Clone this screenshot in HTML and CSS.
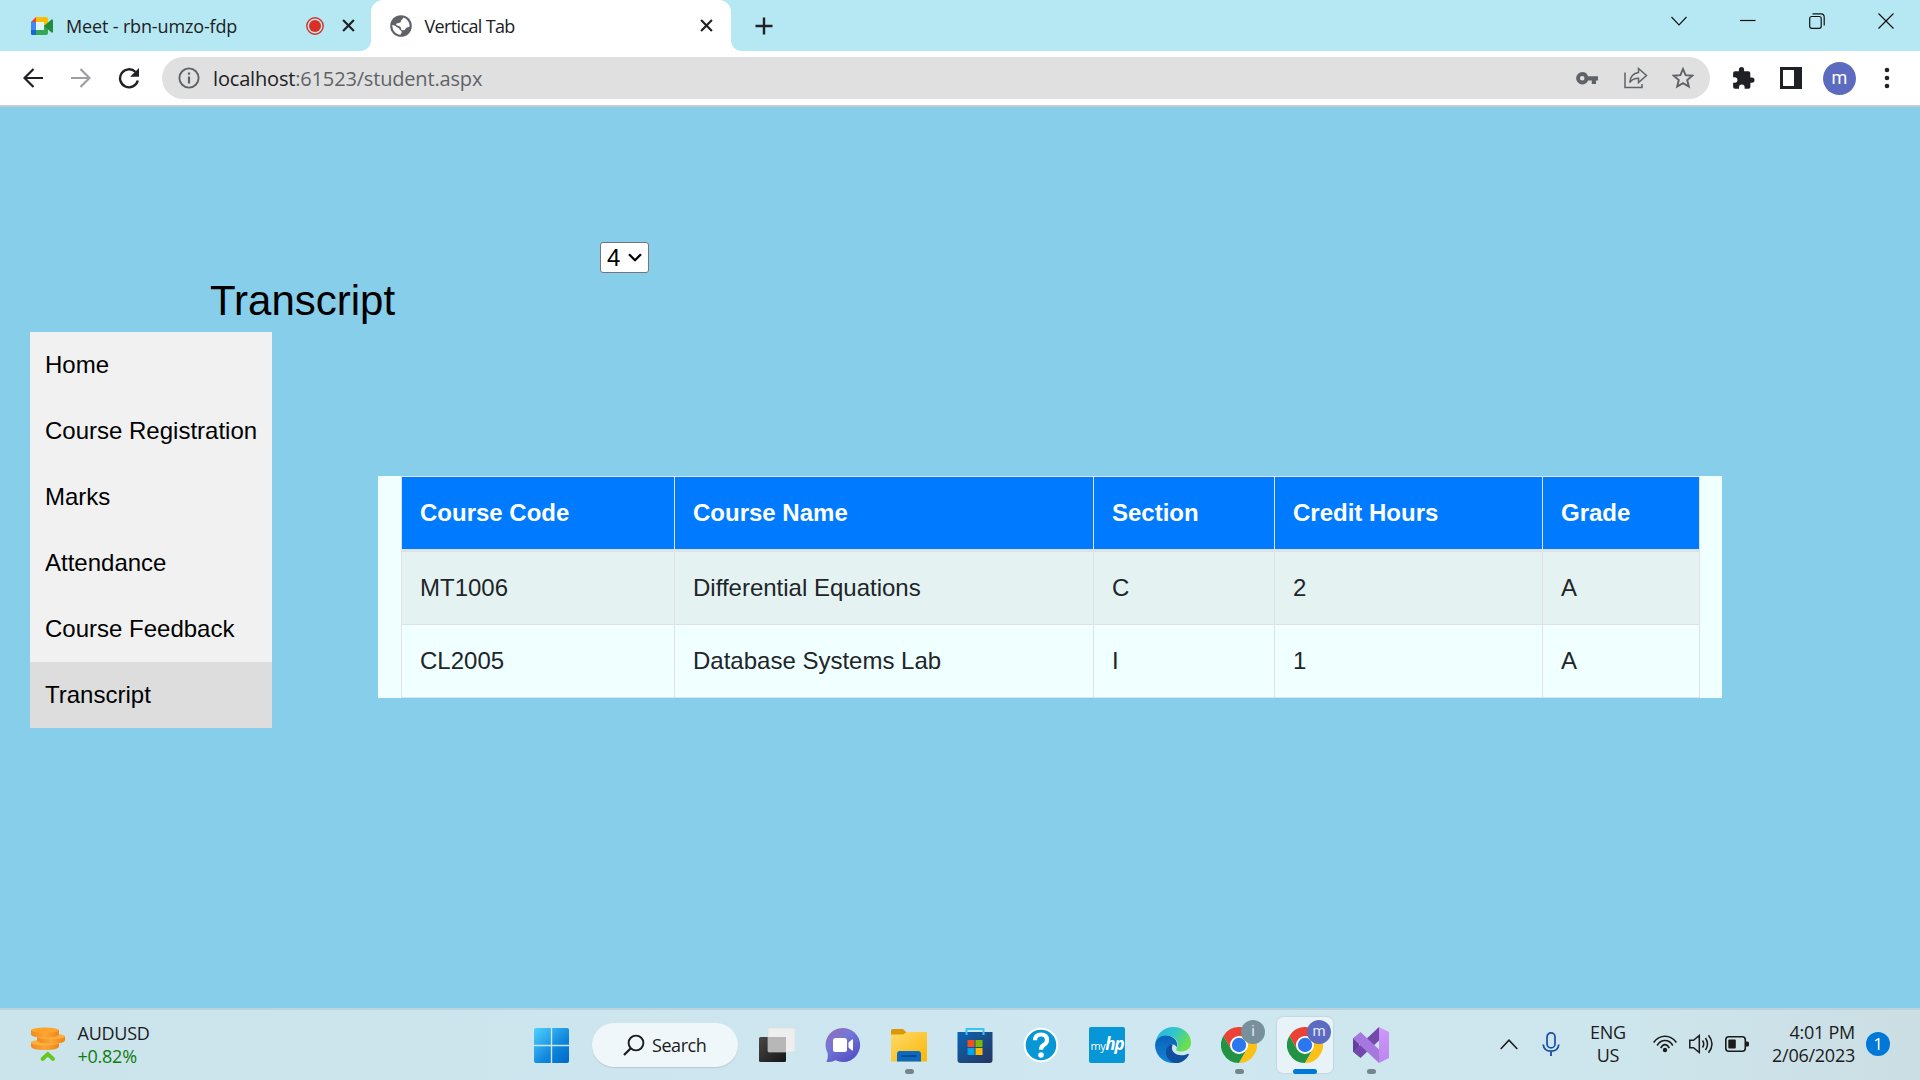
FILE: index.html
```html
<!DOCTYPE html>
<html lang="en">
<head>
<meta charset="utf-8">
<title>Vertical Tab</title>
<link rel="stylesheet" href="styles.css">
</head>
<body>
<svg width="0" height="0" class="defs">
  <defs>
    <linearGradient id="win" x1="0" y1="0" x2="1" y2="1"><stop offset="0" stop-color="#4fd3ff"/><stop offset=".6" stop-color="#0f86dc"/><stop offset="1" stop-color="#0068c6"/></linearGradient>
    <linearGradient id="dark" x1="0" y1="0" x2="1" y2="1"><stop offset="0" stop-color="#484848"/><stop offset="1" stop-color="#151515"/></linearGradient>
    <linearGradient id="chat" x1="0" y1="0" x2=".7" y2="1"><stop offset="0" stop-color="#9b6bb0"/><stop offset=".45" stop-color="#7377d8"/><stop offset="1" stop-color="#5350c4"/></linearGradient>
    <linearGradient id="folder" x1="0" y1="0" x2="1" y2="1"><stop offset="0" stop-color="#ffdb6b"/><stop offset="1" stop-color="#fbb506"/></linearGradient>
    <linearGradient id="store" x1="0" y1="0" x2="1" y2="1"><stop offset="0" stop-color="#0966b5"/><stop offset="1" stop-color="#27345c"/></linearGradient>
    <linearGradient id="edgeTop" x1="0" y1="0" x2="1" y2=".5"><stop offset="0" stop-color="#2bb0e6"/><stop offset=".5" stop-color="#2fc6cf"/><stop offset="1" stop-color="#6be04a"/></linearGradient>
    <linearGradient id="edgeSide" x1="0" y1="0" x2="0" y2="1"><stop offset="0" stop-color="#0c62b6"/><stop offset="1" stop-color="#1184d9"/></linearGradient>
    <linearGradient id="vs" x1="0" y1="0" x2="0" y2="1"><stop offset="0" stop-color="#cf97fb"/><stop offset="1" stop-color="#bb86ee"/></linearGradient>
    <linearGradient id="coin" x1="0" y1="0" x2="1" y2="0"><stop offset="0" stop-color="#f08a18"/><stop offset=".5" stop-color="#fba53a"/><stop offset="1" stop-color="#ef8512"/></linearGradient>
    <symbol id="x" viewBox="0 0 12 12"><path d="M1 1l10 10M11 1L1 11" stroke="#202124" stroke-width="2" fill="none"/></symbol>
    <symbol id="chrome" viewBox="0 0 36 36">
      <path d="M18 9L2.400 9A18 18 0 0 1 33.600 9z" fill="#ea4335"/>
      <path d="M2.400 9L10.200 22.500L12 12L18 9z" fill="#ea4335"/>
      <path d="M2.400 9L10.200 22.500L18 27L25.800 22.500L18 36A18 18 0 0 1 2.400 9z" fill="#229342"/>
      <path d="M25.800 22.500L18 36A18 18 0 0 0 33.600 9H18z" fill="#fbc116"/>
      <circle cx="18" cy="18" r="9" fill="#fff"/><circle cx="18" cy="18" r="7.200" fill="#2b78ee"/>
    </symbol>
  </defs>
</svg>

<header class="tabstrip">
  <div class="tab tab-meet">
    <svg class="meet" width="22" height="18" viewBox="0 0 22 18"><path d="M5 0L0 5h5z" fill="#ea4335"/><path d="M0 5h5v8H0z" fill="#4285f4"/><path d="M0 13h5v5H1.500A1.500 1.500 0 0 1 0 16.500z" fill="#1967d2"/><path d="M5 0h10a2 2 0 0 1 2 2v5l-4 3V5H5z" fill="#fbbc04"/><path d="M5 13h8V8l4 2v6a2 2 0 0 1-2 2H5z" fill="#34a853"/><path d="M5 5h8v8H5z" fill="#dff4f7"/><path d="M13 9l7.500-6.500Q22 2 22 3.500v11Q22 16 20.500 15.500z" fill="#1e8e3e"/></svg>
    <span class="tab-title meet-title">Meet - rbn-umzo-fdp</span>
    <svg class="rec" width="18" height="18" viewBox="0 0 18 18"><circle cx="9" cy="9" r="8.200" fill="none" stroke="#d93025" stroke-width="1.400"/><circle cx="9" cy="9" r="6" fill="#d93025"/></svg>
    <svg width="13" height="13"><use href="#x"/></svg>
  </div>
  <div class="tab tab-active">
    <svg class="globe" width="22" height="22" viewBox="0 0 22 22"><circle cx="11" cy="11" r="10.800" fill="#5f6368"/><path d="M13 2.600a8.700 8.700 0 0 1 6.700 8.400c-1 1.800-2.500.8-3.700 2.200-1 1.300-1.500 2.300-3.500 2.100-2-.3-1-3-2.500-3.800S6 11 6.200 9.300c.2-1.500 2-.8 3.600-1.500s.6-1.600 1.600-2.500S13 4 13 2.600z" fill="#fff"/><path d="M2.300 10c2.500 0 3.200 1.200 4.200 2s2.500.7 3 2.200 2 1 2.200 2.600-.9 1.500-1.200 2.900C5.500 19.500 2.300 15.500 2.300 10z" fill="#fff"/></svg>
    <span class="tab-title vt-title">Vertical Tab</span>
    <svg class="close2" width="13" height="13"><use href="#x"/></svg>
  </div>
  <svg class="plus" width="18" height="18" viewBox="0 0 18 18"><path d="M9 .5v17M.5 9h17" stroke="#202124" stroke-width="2.400"/></svg>
  <div class="winbtns">
    <svg width="16" height="16" viewBox="0 0 16 16"><path d="M.5 4L8 12l7.500-8" fill="none" stroke="#111" stroke-width="1.100"/></svg>
    <svg width="16" height="16" viewBox="0 0 16 16"><path d="M0 7.500h15.500" stroke="#111" stroke-width="1.200"/></svg>
    <svg width="16" height="16" viewBox="0 0 16 16"><rect x=".7" y="3.500" width="11.500" height="11.800" rx="2" fill="none" stroke="#111" stroke-width="1.200"/><path d="M3.500.8h8.500q3.200 0 3.200 3.200v8.500" fill="none" stroke="#111" stroke-width="1.200"/></svg>
    <svg width="16" height="16" viewBox="0 0 16 16"><path d="M.5.500l15 15M15.500.500l-15 15" stroke="#111" stroke-width="1.200"/></svg>
  </div>
</header>

<div class="toolbar">
  <div class="navbtns">
    <svg width="20" height="20" viewBox="0 0 20 20"><path d="M20 10H2M10.500 1L1.500 10l9 9" fill="none" stroke="#202124" stroke-width="2.200"/></svg>
    <svg width="20" height="20" viewBox="0 0 20 20"><path d="M0 10h18M9.500 1l9 9-9 9" fill="none" stroke="#9e9fa2" stroke-width="2.200"/></svg>
    <svg width="22" height="22" viewBox="0 0 22 22"><path d="M17.500 5A9 9 0 1 0 19.800 13.500" fill="none" stroke="#202124" stroke-width="2.400"/><path d="M21 1v8.800h-8.800z" fill="#202124"/></svg>
  </div>
  <div class="omnibox">
    <svg width="22" height="22" viewBox="0 0 22 22"><circle cx="11" cy="11" r="9.600" fill="none" stroke="#5f6368" stroke-width="1.900"/><path d="M11 9.500v7M11 5.500v2.200" stroke="#5f6368" stroke-width="2.200"/></svg>
    <span class="url"><b>localhost</b>:61523/student.aspx</span>
    <svg class="key" width="22" height="13" viewBox="0 0 22 13"><path fill-rule="evenodd" d="M6.200 0a6.200 6.200 0 0 1 5.900 4.300H22v4.200h-2V12h-4.200V8.500h-3.700A6.200 6.200 0 1 1 6.200 0zm0 4a2.300 2.300 0 1 0 0 4.600 2.300 2.300 0 0 0 0-4.600z" fill="#5f6368"/></svg>
    <svg class="share" width="24" height="22" viewBox="0 0 24 22"><path d="M1 5.500V20.500H18V17" fill="none" stroke="#5f6368" stroke-width="1.500"/><path d="M14.500 1.500l8 7-8 7v-4.200c-4 0-6.800 1.200-8.800 4.200.6-5.500 3.500-9.300 8.800-10z" fill="none" stroke="#5f6368" stroke-width="1.500"/></svg>
    <svg class="star" width="22" height="22" viewBox="0 0 22 22"><path d="M11 2l2.600 6.200 6.700.5-5.100 4.400 1.600 6.500L11 16.100l-5.800 3.500 1.600-6.500-5.100-4.400 6.700-.5z" fill="none" stroke="#5f6368" stroke-width="1.900"/></svg>
  </div>
  <svg class="puzzle" width="22" height="22" viewBox="0 0 22 22"><path d="M18.800 10.500h-1.500V6.300a2 2 0 0 0-2-2h-4.200V2.700a2.600 2.600 0 0 0-5.200 0v1.600H2a2 2 0 0 0-1.900 2v3.900h1.500a2.800 2.800 0 0 1 0 5.600H.1v4a2 2 0 0 0 1.900 2h4v-1.500a2.800 2.800 0 0 1 5.600 0v1.500h3.900a2 2 0 0 0 1.900-2v-4.100h1.500a2.600 2.600 0 0 0 0-5.200z" fill="#202124"/></svg>
  <svg class="panel" width="22" height="22" viewBox="0 0 22 22"><path fill-rule="evenodd" d="M0 0h22v22H0zM3 3v16h11V3z" fill="#202124"/></svg>
  <span class="avatar">m</span>
  <svg width="6" height="22" viewBox="0 0 6 22"><g fill="#202124"><circle cx="3" cy="3" r="2.300"/><circle cx="3" cy="11" r="2.300"/><circle cx="3" cy="19" r="2.300"/></g></svg>
</div>

<main class="page">
  <div class="semester">4<svg width="14" height="9" viewBox="0 0 14 9"><path d="M1 1.200l6 6 6-6" fill="none" stroke="#000" stroke-width="2.200"/></svg></div>
  <h1>Transcript</h1>
  <div class="content">
    <nav>
      <a>Home</a><a>Course Registration</a><a>Marks</a><a>Attendance</a><a>Course Feedback</a><a class="current">Transcript</a>
    </nav>
    <section class="panel-table">
      <div class="grid">
        <div class="row head"><span>Course Code</span><span>Course Name</span><span>Section</span><span>Credit Hours</span><span>Grade</span></div>
        <div class="row odd"><span>MT1006</span><span>Differential Equations</span><span>C</span><span>2</span><span>A</span></div>
        <div class="row"><span>CL2005</span><span>Database Systems Lab</span><span>I</span><span>1</span><span>A</span></div>
      </div>
    </section>
  </div>
</main>

<footer class="taskbar">
  <div class="widget">
    <svg width="34" height="36" viewBox="0 0 34 36"><path d="M0 19v-4q14-4 28 0v4q0 4-14 4T0 19z" fill="url(#coin)"/><ellipse cx="14" cy="15.500" rx="14" ry="3" fill="#fcb040"/><path d="M6 13V9q14-4 28 0v4q0 3.500-14 3.500T6 13z" fill="url(#coin)"/><ellipse cx="20" cy="9.500" rx="14" ry="2.800" fill="#fcae3c"/><path d="M0 7V3q14-4 28 0v4q0 3.500-14 3.500T0 7z" fill="url(#coin)"/><ellipse cx="14" cy="3.200" rx="13.500" ry="2.800" fill="#ffa428"/><path d="M11.500 32l5.300-5 5.300 5" fill="none" stroke="#66c61c" stroke-width="3.800" stroke-linecap="round"/></svg>
    <div class="ticker"><span>AUDUSD</span><span class="up">+0.82%</span></div>
  </div>
  <svg class="start" width="35" height="35" viewBox="0 0 35 35"><path d="M2 0h14.800v16.800H0V2Q0 0 2 0zM18.200 0H33q2 0 2 2v14.800H18.200zM0 18.200h16.800V35H2q-2 0-2-2zM18.200 18.200H35V33q0 2-2 2H18.200z" fill="url(#win)"/></svg>
  <div class="search"><svg width="22" height="22" viewBox="0 0 22 22"><circle cx="13" cy="9" r="7.400" fill="none" stroke="#1b1b1b" stroke-width="1.900"/><path d="M7.800 14.200L1 21" stroke="#1b1b1b" stroke-width="2.200"/></svg><span>Search</span></div>
  <div class="apps">
    <div class="app"><svg width="36" height="36" viewBox="0 0 36 36"><rect x="0" y="10" width="27" height="25" rx="1.500" fill="url(#dark)"/><rect x="9" y="1" width="27" height="24" rx="1" fill="#eee" stroke="#dcdcdc" stroke-width=".6"/><path d="M9 10h18v15H9z" fill="#b7b7b7"/></svg></div>
    <div class="app"><svg width="36" height="36" viewBox="0 0 36 36"><path d="M18 1a17 17 0 1 1-7.500 32.200Q6 35.500 1.300 35 3.500 31.500 2.600 26A17 17 0 0 1 18 1z" fill="url(#chat)"/><rect x="8" y="11" width="14" height="14" rx="2.500" fill="#fff"/><path d="M23.500 15.500l3.500-3q1-.5 1 .6v9.800q0 1-1 .6l-3.500-3z" fill="#fff"/></svg></div>
    <div class="app"><svg width="36" height="36" viewBox="0 0 36 36"><path d="M0 3.500Q0 2 1.500 2H12l4 4v6H0z" fill="#dc9705"/><path d="M0 7.500h12l4-2.500h19q1 0 1 1v28.500H0z" fill="url(#folder)"/><path d="M6 34.500V27q0-3 3-3h18q3 0 3 3v7.500z" fill="#096abf"/><path d="M11 29h14" stroke="#053f84" stroke-width="1.600" stroke-linecap="round"/></svg><i></i></div>
    <div class="app"><svg width="36" height="36" viewBox="0 0 36 36"><path d="M.5 5H35.500v28q0 3-3 3h-29q-3 0-3-3z" fill="url(#store)"/><path d="M9.500 8V2h17v6" fill="none" stroke="#36c6f4" stroke-width="2"/><path d="M10.500 13h7v7h-7z" fill="#f25022"/><path d="M18.500 13h7v7h-7z" fill="#7fba00"/><path d="M10.500 21h7v7h-7z" fill="#00a4ef"/><path d="M18.500 21h7v7h-7z" fill="#ffb900"/></svg></div>
    <div class="app"><svg width="36" height="36" viewBox="0 0 36 36"><circle cx="18" cy="18" r="16.300" fill="#0797d6" stroke="#fff" stroke-width="2"/><path d="M12 13.200Q12 7.500 18 7.500T24 13q0 3-3 4.800-3 1.700-3 5" fill="none" stroke="#fff" stroke-width="4.200"/><circle cx="18" cy="28" r="2.800" fill="#fff"/></svg></div>
    <div class="app"><span class="hp">my<b>hp</b></span></div>
    <div class="app"><svg width="36" height="36" viewBox="0 0 36 36"><path d="M.3 16.500C1.500 7 8.500 0 18.200 0 29 0 36 7.500 36 15.500c0 5.500-4 9-9.500 9-4 0-6-1.300-5.200-2.500 3.200-4.500 1-12-8-13.200C7 8 2 12 .3 16.500z" fill="url(#edgeTop)"/><path d="M0 18C1 10.500 7.500 8 12.500 8.700c7 .7 11 6 9.300 11.600-1-2.200-3-3.300-5-2.800-3 .8-4 5-2 9.500 2 4.500 6 8 10 7.700A18 18 0 0 1 0 18z" fill="url(#edgeSide)"/><path d="M14 18.500c-6 5-3 15.500 6 17.400 6 .6 11-3 13.700-8 .5-1-.3-1.500-1.200-1-4 2-11 2-14.500-2.500-1.300-1.800-1.300-4-.3-6.800-1.400-.4-2.700 0-3.700.9z" fill="#104f9d"/></svg></div>
    <div class="app"><svg width="36" height="36"><use href="#chrome"/></svg><em class="badge gray">i</em><i></i></div>
    <div class="app active"><svg width="36" height="36"><use href="#chrome"/></svg><em class="badge">m</em><i></i></div>
    <div class="app"><svg width="36" height="36" viewBox="0 0 36 36"><path d="M0 11.500L6 7v22.500L0 24.500z" fill="#60409c"/><path d="M0 24.500L7.500 31 26 13.500V0z" fill="#7249aa"/><path d="M0 11.500L7.500 5 26 22.500V36z" fill="#a677de"/><path d="M26 0l10 5v26l-10 5z" fill="url(#vs)"/></svg><i></i></div>
  </div>
  <div class="tray">
    <svg class="up-arrow" width="18" height="11" viewBox="0 0 18 11"><path d="M.7 10L9 1.200 17.300 10" fill="none" stroke="#1b1b1b" stroke-width="1.500"/></svg>
    <svg class="mic" width="18" height="24" viewBox="0 0 18 24"><rect x="5" y=".9" width="8" height="15" rx="4" fill="none" stroke="#174ea6" stroke-width="1.700"/><path d="M1.200 12.500Q2 19.200 9 19.200t7.800-6.700M9 19v5" fill="none" stroke="#174ea6" stroke-width="1.800"/></svg>
    <div class="lang"><span>ENG</span><span>US</span></div>
    <svg class="wifi" width="24" height="18" viewBox="0 0 24 18"><g fill="none" stroke="#1b1b1b" stroke-width="1.600"><path d="M.6 7.500Q5 1.200 12 1.200t11.400 6.300M4.200 10.500Q7 5.500 12 5.500t7.800 5M7.700 13.200Q9.500 9.600 12 9.600t4.300 3.600"/></g><circle cx="12" cy="15" r="2.200" fill="#1b1b1b"/></svg>
    <svg class="sound" width="24" height="20" viewBox="0 0 24 20"><g fill="none" stroke="#1b1b1b" stroke-width="1.500"><path d="M.8 6.300h3.700L10.300 1.500v17L4.500 13.700H.8zM13.500 6.500q2.500 3.500 0 7M16.500 4q4 6 0 12M19.500 1.200q7 8.800 0 17.600"/></g></svg>
    <svg class="battery" width="24" height="16" viewBox="0 0 24 16"><rect x=".8" y=".8" width="19.500" height="14.400" rx="3" fill="none" stroke="#1b1b1b" stroke-width="1.600"/><rect x="3.300" y="3.500" width="7.500" height="9" rx="1" fill="#1b1b1b"/><path d="M21 5.500h1.500q1.500 0 1.500 1.500v2q0 1.500-1.500 1.500H21z" fill="#1b1b1b"/></svg>
    <div class="clock"><span>4:01 PM</span><span>2/06/2023</span></div>
    <span class="count">1</span>
  </div>
</footer>
</body>
</html>
```

FILE: styles.css
```css
* { box-sizing: border-box; }
body { margin: 0; width: 1920px; height: 1080px; overflow: hidden; display: flex; flex-direction: column; font-family: "Open Sans", "Noto Sans", sans-serif; background: #87ceea; }
svg { display: block; flex: none; }
.defs { position: absolute; }

.tabstrip { height: 51px; flex: none; background: #b5e8f2; display: flex; align-items: center; }
.tab { height: 51px; display: flex; align-items: center; }
.tab-meet { width: 371px; padding-left: 31px; }
.tab-title { font-size: 18px; line-height: 24px; color: #202124; white-space: nowrap; }
.meet-title { margin-left: 13px; width: 240px; letter-spacing: -.15px; }
.rec { margin-right: 17.500px; }
.tab-active { width: 360px; background: #fff; border-radius: 12px 12px 0 0; padding-left: 19px; position: relative; }
.tab-active::before, .tab-active::after { content: ""; position: absolute; bottom: 0; width: 10px; height: 10px; }
.tab-active::before { left: -10px; background: radial-gradient(circle at 0 0, #b5e8f2 9.500px, #fff 10px); }
.tab-active::after { right: -10px; background: radial-gradient(circle at 100% 0, #b5e8f2 9.500px, #fff 10px); }
.vt-title { margin-left: 12.500px; letter-spacing: -.65px; }
.close2 { margin: 0 18px 0 auto; }
.plus { margin-left: 23.500px; }
.winbtns { display: flex; gap: 53px; margin: -9px 26.500px 0 auto; }

.toolbar { height: 56px; flex: none; background: #fff; border-bottom: 2px solid #c9cacb; display: flex; align-items: center; }
.navbtns { display: flex; align-items: center; gap: 27.500px; width: 162px; padding-left: 23px; }
.omnibox { width: 1548px; height: 42px; border-radius: 21px; background: #e0e0e0; display: flex; align-items: center; padding: 0 16px; }
.url { margin: 0 auto 0 13px; font-size: 20px; letter-spacing: -.17px; color: #5f6368; white-space: nowrap; }
.url b { font-weight: 400; color: #202124; }
.share { margin-left: 26px; }
.star { margin-left: 24px; }
.puzzle { margin-left: 23px; }
.panel { margin-left: 25px; }
.avatar { width: 33px; height: 33px; border-radius: 50%; background: #5c6bc0; color: #fff; margin: 0 28px 0 21px; font: 18px/31px Roboto, sans-serif; text-align: center; }

.page { flex: 1; background: #87ceea; padding: 135px 0 0 30px; font-family: "Liberation Sans", Arial, sans-serif; }
.semester { width: 49px; height: 31px; margin-left: 570px; border: 1px solid #767676; border-radius: 3px; background: #fff; font-size: 24px; line-height: 30px; padding: 0 6px; display: flex; align-items: center; justify-content: space-between; color: #000; }
h1 { margin: 0 0 7px 180px; font-size: 42px; line-height: 48px; font-weight: 400; padding-top: 4px; height: 52px; }
.content { display: flex; }
nav { width: 242px; height: 396px; background: #f1f1f1; font-size: 24px; color: #000; }
nav a { display: block; height: 66px; line-height: 66px; padding-left: 15px; }
nav .current { background: #ddd; }
.panel-table { width: 1344px; height: 222px; margin: 144px 0 0 106px; background: #f0ffff; padding-left: 23px; }
.grid { width: 1299px; border: 1px solid #dee2e6; border-width: 1px 0 0 1px; font-size: 24px; color: #212529; }
.row { display: grid; grid-template-columns: 273px 419px 181px 268px 157px; height: 73px; line-height: 72px; border-bottom: 1px solid #dee2e6; }
.row span { padding-left: 18px; border-right: 1px solid #dee2e6; white-space: nowrap; }
.row.head { height: 75px; border-bottom-width: 3px; background: #007bff; color: #fff; font-weight: 700; }
.row.odd { background: #e4f2f2; }

.taskbar { height: 72px; flex: none; background: linear-gradient(90deg, #cbe3eb 0, #cfe7f0 60%, #cde5ec 85%, #cbdee4 100%); border-top: 2px solid #bcd3dd; display: flex; align-items: center; }
.widget { width: 534px; padding-left: 31px; display: flex; align-items: center; gap: 12.500px; }
.ticker, .lang, .clock { display: flex; flex-direction: column; font-size: 18px; line-height: 23.500px; letter-spacing: -.25px; color: #1b1b1b; white-space: nowrap; }
.up { color: #107c10; }
.search { margin-left: 23px; width: 146px; height: 44px; border-radius: 22px; background: #eff7fa; box-shadow: 0 1px 1px #b5cbd4; display: flex; align-items: center; padding-left: 31px; gap: 7px; font-size: 18px; letter-spacing: -.45px; color: #1b1b1b; }
.apps { display: flex; margin-left: 11px; gap: 10px; }
.app { width: 56px; height: 56px; border-radius: 6px; display: flex; align-items: center; justify-content: center; position: relative; }
.app i { position: absolute; bottom: -1px; left: 24px; width: 9px; height: 5px; border-radius: 3px; background: #76858b; }
.app.active { background: #e8f3f8; box-shadow: 0 0 1px 1px #c3d9e2; }
.app.active i { left: 16px; width: 24px; background: #0078d7; }
.badge { position: absolute; left: 30px; top: 3px; width: 24px; height: 24px; border-radius: 50%; background: #5c6bc0; color: #e3e7fa; font: 15px/22px Roboto, sans-serif; text-align: center; }
.badge.gray { background: #78909c; }
.hp { width: 36px; height: 36px; background: #0797d6; border-radius: 2px; color: #fff; font-size: 11px; line-height: 34px; text-align: center; letter-spacing: -.5px; }
.hp b { font-size: 17px; font-style: italic; letter-spacing: -1px; }
.tray { display: flex; align-items: center; margin: -2px 30px 0 auto; }
.mic { margin-left: 24px; }
.lang { margin-left: 30px; width: 36px; align-items: center; }
.wifi { margin-left: 27px; }
.sound { margin-left: 12px; }
.battery { margin-left: 12px; }
.clock { width: 106px; align-items: flex-end; }
.count { width: 24px; height: 24px; margin-left: 11px; border-radius: 50%; background: #0078d7; color: #fff; font-size: 17px; line-height: 23px; text-align: center; }
```
